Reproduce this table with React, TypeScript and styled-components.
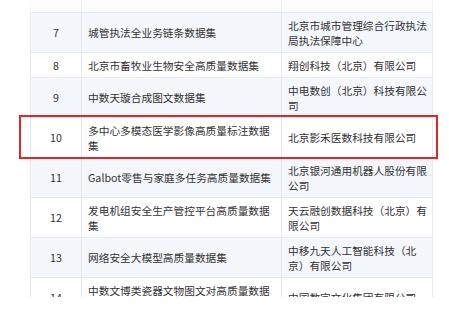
import React from 'react'
import styled, { createGlobalStyle } from 'styled-components'

interface DatasetRow {
  no: number
  name: string
  org: string
  highlight?: boolean
}

const rows: DatasetRow[] = [
  { no: 7, name: '城管执法全业务链条数据集', org: '北京市城市管理综合行政执法局执法保障中心' },
  { no: 8, name: '北京市畜牧业生物安全高质量数据集', org: '翔创科技（北京）有限公司' },
  { no: 9, name: '中数天璇合成图文数据集', org: '中电数创（北京）科技有限公司' },
  { no: 10, name: '多中心多模态医学影像高质量标注数据集', org: '北京影禾医数科技有限公司', highlight: true },
  { no: 11, name: 'Galbot零售与家庭多任务高质量数据集', org: '北京银河通用机器人股份有限公司' },
  { no: 12, name: '发电机组安全生产管控平台高质量数据集', org: '天云融创数据科技（北京）有限公司' },
  { no: 13, name: '网络安全大模型高质量数据集', org: '中移九天人工智能科技（北京）有限公司' },
  { no: 14, name: '中数文博类瓷器文物图文对高质量数据集', org: '中国数字文化集团有限公司' },
]

const App: React.FC = () => (
  <>
    <GlobalStyle />
    <Viewport>
      <Table>
        <colgroup>
          <col style={{ width: 51 }} />
          <col style={{ width: 200 }} />
          <col style={{ width: 151 }} />
        </colgroup>
        <tbody>
          <FadedRow>
            <td />
            <td />
            <td />
          </FadedRow>
          {rows.map(({ no, name, org, highlight }) => (
            <Row key={no} $striped={no % 2 === 1}>
              <NumberCell>
                {no}
                {highlight && <Highlight />}
              </NumberCell>
              <TextCell>{name}</TextCell>
              <TextCell>{org}</TextCell>
            </Row>
          ))}
        </tbody>
      </Table>
    </Viewport>
  </>
)

export default App

const GlobalStyle = createGlobalStyle`
  html, body {
    margin: 0;
    padding: 0;
    background: #ffffff;
  }
  body {
    font-family: "Noto Sans CJK SC", "Noto Sans", sans-serif;
  }
`

const Viewport = styled.div`
  width: 449px;
  height: 297px;
  overflow: hidden;
  padding-left: 30px;
  box-sizing: border-box;
`

const Table = styled.table`
  width: 402px;
  table-layout: fixed;
  border-collapse: collapse;
  font-size: 10.7px;
  line-height: 15px;
  color: #333;

  td {
    border: 1px solid #e6e9ee;
    vertical-align: middle;
  }
`

const FadedRow = styled.tr`
  td {
    height: 12px;
    padding: 0;
    border-top: none;
    border-left-color: #fafbfc;
    border-right-color: #f1f2f4;
    background: #fdfdfe;
  }
`

const Row = styled.tr<{ $striped: boolean }>`
  background: ${({ $striped }) => ($striped ? '#f4f7fc' : '#ffffff')};
`

const NumberCell = styled.td`
  position: relative;
  text-align: center;
  padding: 4.5px 0;
`

const TextCell = styled.td`
  padding: 4.5px 5px 4.5px 6px;
  word-break: break-all;
`

const Highlight = styled.span`
  position: absolute;
  left: -12px;
  top: -3px;
  width: 419px;
  height: 44px;
  border: 2.5px solid #e3242b;
  box-sizing: border-box;
  pointer-events: none;
`
